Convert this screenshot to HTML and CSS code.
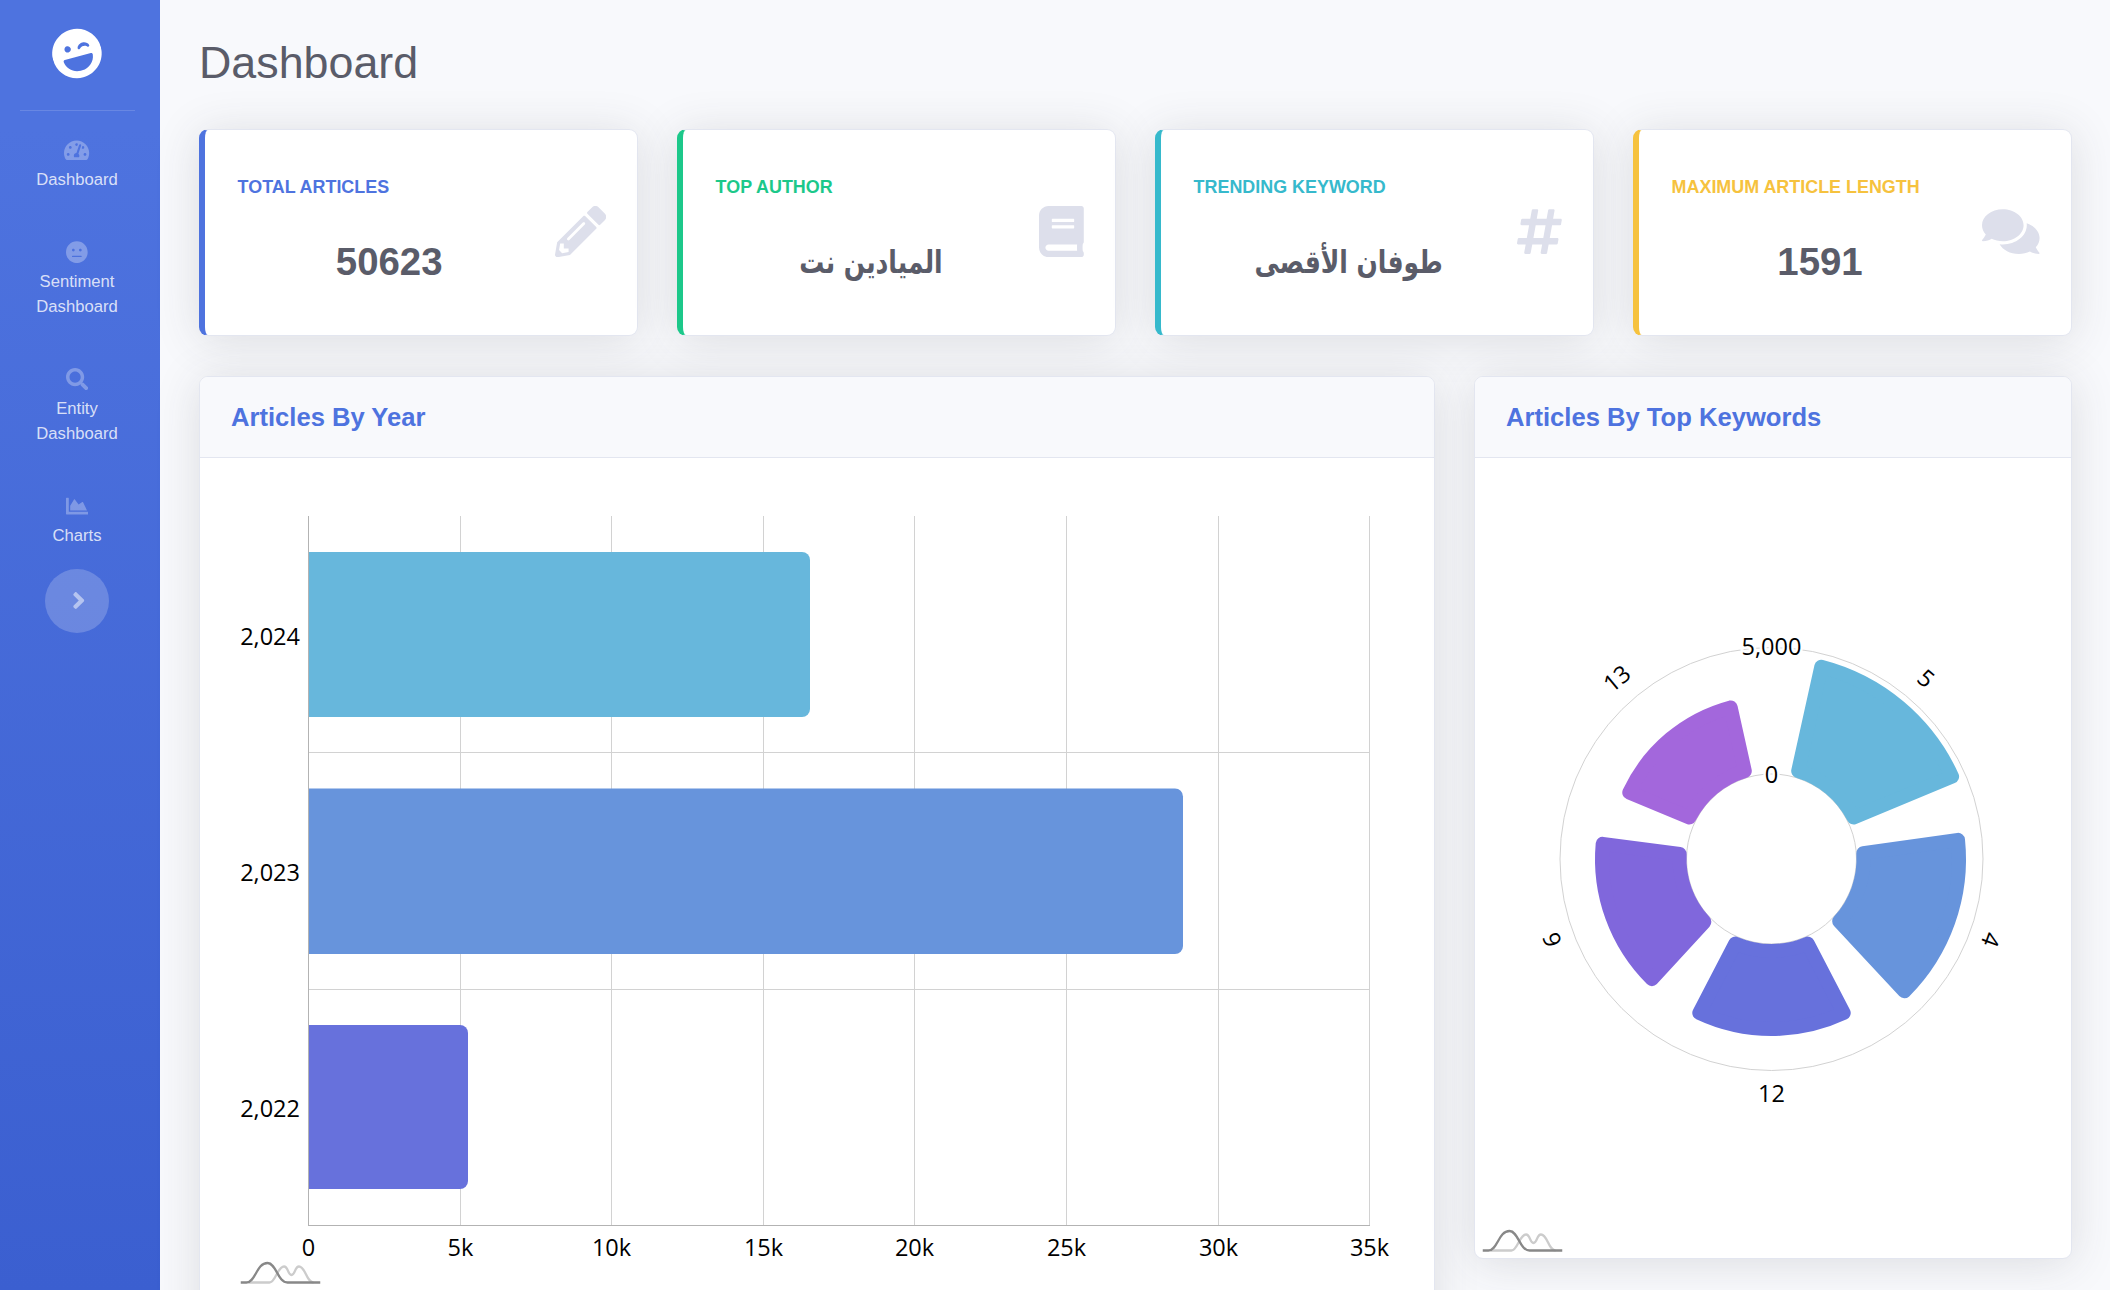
FILE: index.html
```html
<!DOCTYPE html>
<html lang="en">
<head>
    <meta charset="UTF-8">
    <title>Dashboard</title>
    <link rel="stylesheet" href="styles.css">
</head>
<body>
    <!-- sidebar -->
    <aside class="sidebar">
        <div class="brand">
            <svg class="brand-icon" viewBox="0 0 496 512"><path d="M248 8C111 8 0 119 0 256s111 248 248 248 248-111 248-248S385 8 248 8zm20.1 198.1c4-25.2 34.2-42.1 59.9-42.1s55.9 16.9 59.9 42.1c1.7 11.1-11.4 18.3-19.8 10.8l-9.5-8.5c-14.8-13.2-46.2-13.2-61 0L288 217c-8.4 7.4-21.6.3-19.9-10.9zM168 160c17.7 0 32 14.3 32 32s-14.3 32-32 32-32-14.3-32-32 14.3-32 32-32zm230.9 146C390 377 329.4 432 256 432h-16c-73.4 0-134-55-142.9-126-1.2-9.5 6.3-18 15.9-18h270c9.6 0 17.1 8.4 15.9 18z"/></svg>
        </div>
        <hr class="sidebar-divider">
        <a class="nav-link">
            <svg class="nav-icon" viewBox="0 0 576 512"><path d="M288 32C128.94 32 0 160.94 0 320c0 52.8 14.25 102.26 39.06 144.8 5.61 9.62 16.3 15.2 27.44 15.2h443c11.14 0 21.83-5.58 27.44-15.2C561.75 422.26 576 372.8 576 320c0-159.06-128.94-288-288-288zm0 64c14.71 0 26.58 10.13 30.32 23.65-1.11 2.26-2.64 4.23-3.45 6.67l-9.22 27.67c-5.13 3.49-10.97 6.01-17.64 6.01-17.67 0-32-14.33-32-32S270.33 96 288 96zM96 384c-17.67 0-32-14.33-32-32s14.33-32 32-32 32 14.33 32 32-14.33 32-32 32zm48-160c-17.67 0-32-14.33-32-32s14.33-32 32-32 32 14.33 32 32-14.33 32-32 32zm246.77-72.41l-61.33 184C343.13 347.33 352 364.54 352 384c0 11.72-3.38 22.55-8.88 32H232.88c-5.5-9.45-8.88-20.28-8.88-32 0-33.94 26.5-61.43 59.9-63.59l61.34-184.01c4.17-12.56 17.73-19.45 30.36-15.17 12.57 4.19 19.35 17.79 15.17 30.36zm14.66 57.2l15.52-46.55c3.47-1.29 7.13-2.23 11.05-2.23 17.67 0 32 14.33 32 32s-14.33 32-32 32c-11.38-.01-20.89-6.28-26.57-15.22zM480 384c-17.67 0-32-14.33-32-32s14.33-32 32-32 32 14.33 32 32-14.33 32-32 32z"/></svg>
            <span>Dashboard</span>
        </a>
        <a class="nav-link">
            <svg class="nav-icon" viewBox="0 0 496 512"><path d="M248 8C111 8 0 119 0 256s111 248 248 248 248-111 248-248S385 8 248 8zm-80 168c17.7 0 32 14.3 32 32s-14.3 32-32 32-32-14.3-32-32 14.3-32 32-32zm176 192H152c-21.2 0-21.2-32 0-32h192c21.2 0 21.2 32 0 32zm-16-128c-17.7 0-32-14.3-32-32s14.3-32 32-32 32 14.3 32 32-14.3 32-32 32z"/></svg>
            <span>Sentiment Dashboard</span>
        </a>
        <a class="nav-link">
            <svg class="nav-icon" viewBox="0 0 512 512"><path d="M505 442.7L405.3 343c-4.5-4.5-10.6-7-17-7H372c27.6-35.3 44-79.7 44-128C416 93.1 322.9 0 208 0S0 93.1 0 208s93.1 208 208 208c48.3 0 92.7-16.4 128-44v16.3c0 6.4 2.5 12.5 7 17l99.7 99.7c9.4 9.4 24.6 9.4 33.9 0l28.3-28.3c9.4-9.4 9.4-24.6.1-34zM208 336c-70.7 0-128-57.2-128-128 0-70.7 57.2-128 128-128 70.7 0 128 57.2 128 128 0 70.7-57.2 128-128 128z"/></svg>
            <span>Entity Dashboard</span>
        </a>
        <a class="nav-link">
            <svg class="nav-icon" viewBox="0 0 512 512"><path d="M500 384c6.6 0 12 5.4 12 12v40c0 6.6-5.4 12-12 12H12c-6.6 0-12-5.4-12-12V76c0-6.6 5.4-12 12-12h40c6.6 0 12 5.4 12 12v308h436zM372.7 159.5L288 216l-85.3-113.7c-5.1-6.8-15.5-6.3-19.9 1L96 248v104h384l-89.9-187.8c-3.2-6.5-11.4-8.7-17.4-4.7z"/></svg>
            <span>Charts</span>
        </a>
        <button class="sidebar-toggle">
            <svg class="toggle-icon" viewBox="0 0 256 512"><path d="M224.3 273l-136 136c-9.4 9.4-24.6 9.4-33.9 0l-22.6-22.6c-9.4-9.4-9.4-24.6 0-33.9l96.4-96.4-96.4-96.4c-9.4-9.4-9.4-24.6 0-33.9L54.3 103c9.4-9.4 24.6-9.4 33.9 0l136 136c9.5 9.4 9.5 24.6.1 34z"/></svg>
        </button>
    </aside>

    <main class="content">
        <h1 class="page-title">Dashboard</h1>

        <!-- stat cards -->
        <section class="stat-row">
            <div class="stat-card stat-primary">
                <div class="stat-text">
                    <div class="stat-label">Total Articles</div>
                    <div class="stat-value">50623</div>
                </div>
                <svg class="stat-icon" viewBox="0 0 512 512"><path d="M497.9 142.1l-46.1 46.1c-4.7 4.7-12.3 4.7-17 0l-111-111c-4.7-4.7-4.7-12.3 0-17l46.1-46.1c18.7-18.7 49.1-18.7 67.9 0l60.1 60.1c18.8 18.7 18.8 49.1 0 67.9zM284.2 99.8L21.6 362.4.4 483.9c-2.9 16.4 11.4 30.6 27.8 27.8l121.5-21.3 262.6-262.6c4.7-4.7 4.7-12.3 0-17l-111-111c-4.8-4.7-12.4-4.7-17.1 0zM124.1 339.9c-5.5-5.5-5.5-14.3 0-19.8l154-154c5.5-5.5 14.3-5.5 19.8 0s5.5 14.3 0 19.8l-154 154c-5.5 5.5-14.3 5.5-19.8 0zM88 424h48v36.3l-64.5 11.3-31.1-31.1L51.7 376H88v48z"/></svg>
            </div>
            <div class="stat-card stat-success">
                <div class="stat-text">
                    <div class="stat-label">Top Author</div>
                    <div class="stat-value"><span class="stat-arabic" dir="rtl">الميادين نت</span></div>
                </div>
                <svg class="stat-icon" viewBox="0 0 448 512"><path d="M448 360V24c0-13.3-10.7-24-24-24H96C43 0 0 43 0 96v320c0 53 43 96 96 96h328c13.3 0 24-10.7 24-24v-16c0-7.5-3.5-14.3-8.9-18.7-4.2-15.4-4.2-59.3 0-74.7 5.4-4.3 8.9-11.1 8.9-18.6zM128 134c0-3.3 2.7-6 6-6h212c3.3 0 6 2.7 6 6v20c0 3.3-2.7 6-6 6H134c-3.3 0-6-2.7-6-6v-20zm0 64c0-3.3 2.7-6 6-6h212c3.3 0 6 2.7 6 6v20c0 3.3-2.7 6-6 6H134c-3.3 0-6-2.7-6-6v-20zm253.4 250H96c-17.7 0-32-14.3-32-32 0-17.6 14.4-32 32-32h285.4c-1.9 17.1-1.9 46.9 0 64z"/></svg>
            </div>
            <div class="stat-card stat-info">
                <div class="stat-text">
                    <div class="stat-label">Trending Keyword</div>
                    <div class="stat-value"><span class="stat-arabic" dir="rtl">طوفان الأقصى</span></div>
                </div>
                <svg class="stat-icon" viewBox="0 0 448 512"><path d="M440.667 182.109l7.143-40c1.313-7.355-4.342-14.109-11.813-14.109h-74.81l14.623-81.891C377.123 38.754 371.468 32 363.997 32h-40.632a12 12 0 0 0-11.813 9.891L296.175 128H197.54l14.623-81.891C213.477 38.754 207.822 32 200.35 32h-40.632a12 12 0 0 0-11.813 9.891L132.528 128H53.432a12 12 0 0 0-11.813 9.891l-7.143 40C33.163 185.246 38.818 192 46.289 192h74.81L98.242 320H19.146a12 12 0 0 0-11.813 9.891l-7.143 40C-1.123 377.246 4.532 384 12.003 384h74.81L72.19 465.891C70.877 473.246 76.532 480 84.003 480h40.632a12 12 0 0 0 11.813-9.891L152.825 384h98.634l-14.623 81.891C235.523 473.246 241.178 480 248.65 480h40.632a12 12 0 0 0 11.813-9.891L316.472 384h79.096a12 12 0 0 0 11.813-9.891l7.143-40c1.313-7.355-4.342-14.109-11.813-14.109h-74.81l22.857-128h79.096a12 12 0 0 0 11.813-9.891zM262.889 320h-98.634l22.857-128h98.634l-22.857 128z"/></svg>
            </div>
            <div class="stat-card stat-warning">
                <div class="stat-text">
                    <div class="stat-label">Maximum Article Length</div>
                    <div class="stat-value">1591</div>
                </div>
                <svg class="stat-icon" viewBox="0 0 576 512"><path d="M416 192c0-88.4-93.1-160-208-160S0 103.6 0 192c0 34.3 14.1 65.9 38 92-13.4 30.2-35.5 54.2-35.8 54.5-2.2 2.3-2.8 5.7-1.5 8.7S4.8 352 8 352c36.6 0 66.9-12.3 88.7-25 32.2 15.7 70.3 25 111.3 25 114.9 0 208-71.6 208-160zm122 220c23.9-26 38-57.7 38-92 0-66.9-53.5-124.2-129.3-148.1.9 6.6 1.3 13.3 1.3 20.1 0 105.9-107.7 192-240 192-10.8 0-21.3-.8-31.7-1.9C207.8 439.6 281.8 480 368 480c41 0 79.1-9.2 111.3-25 21.8 12.7 52.1 25 88.7 25 3.2 0 6.1-1.9 7.3-4.8 1.3-2.9.7-6.3-1.5-8.7-.3-.3-22.4-24.2-35.8-54.5z"/></svg>
            </div>
        </section>

        <!-- charts -->
        <section class="chart-row">
            <div class="chart-card">
                <div class="chart-header"><h2>Articles By Year</h2></div>
                <svg class="chart chart-bars" viewBox="200 458 1234 900">
                    <symbol id="chart-logo" viewBox="0 -2 80 24">
                        <path class="logo-light" d="M8 20H29C35 20 37 4 43.5 4C48 4 47 12.5 51 12.5C55 12.5 54 4 58.5 4C65 4 66 20 73 20"/>
                        <path class="logo-dark" d="M0 20H6C15 20 16 .5 27 .5C36 .5 37 20 47 20H80"/>
                    </symbol>

                    <g class="grid-lines">
                        <line x1="460.5" y1="516" x2="460.5" y2="1225"/>
                        <line x1="611.5" y1="516" x2="611.5" y2="1225"/>
                        <line x1="763.5" y1="516" x2="763.5" y2="1225"/>
                        <line x1="914.5" y1="516" x2="914.5" y2="1225"/>
                        <line x1="1066.5" y1="516" x2="1066.5" y2="1225"/>
                        <line x1="1218.5" y1="516" x2="1218.5" y2="1225"/>
                        <line x1="1369.5" y1="516" x2="1369.5" y2="1225"/>
                        <line x1="308" y1="752.5" x2="1370" y2="752.5"/>
                        <line x1="308" y1="989.5" x2="1370" y2="989.5"/>
                    </g>
                    <path class="bar bar-1" d="M308 552H802a8 8 0 0 1 8 8V709a8 8 0 0 1-8 8H308Z"/>
                    <path class="bar bar-2" d="M308 788.5H1175a8 8 0 0 1 8 8V946a8 8 0 0 1-8 8H308Z"/>
                    <path class="bar bar-3" d="M308 1025H460a8 8 0 0 1 8 8V1181a8 8 0 0 1-8 8H308Z"/>
                    <g class="axis-lines">
                        <line x1="308.5" y1="516" x2="308.5" y2="1225.5"/>
                        <line x1="308" y1="1225.5" x2="1370" y2="1225.5"/>
                    </g>

                    <g class="axis-labels axis-y">
                        <text x="300" y="636">2,024</text>
                        <text x="300" y="872">2,023</text>
                        <text x="300" y="1108">2,022</text>
                    </g>
                    <g class="axis-labels axis-x">
                        <text x="308.5" y="1247">0</text>
                        <text x="460.5" y="1247">5k</text>
                        <text x="611.5" y="1247">10k</text>
                        <text x="763.5" y="1247">15k</text>
                        <text x="914.5" y="1247">20k</text>
                        <text x="1066.5" y="1247">25k</text>
                        <text x="1218.5" y="1247">30k</text>
                        <text x="1369.5" y="1247">35k</text>
                    </g>
                    <use href="#chart-logo" x="240.5" y="1260.5" width="80" height="24"/>
                </svg>
            </div>

            <div class="chart-card">
                <div class="chart-header"><h2>Articles By Top Keywords</h2></div>
                <svg class="chart chart-polar" viewBox="1475 458 596 800">
                    <g class="polar-rings">
                        <circle cx="1771.5" cy="859" r="211.5"/>
                        <circle cx="1771.5" cy="859" r="85"/>
                    </g>
                    <!-- data-a = start angle, data-r = outer radius -->
                    <path class="sector bar-1" data-a="12.5" data-r="205.5"/>
                    <path class="sector bar-2" data-a="82" data-r="194.5"/>
                    <path class="sector bar-3" data-a="152.5" data-r="177"/>
                    <path class="sector bar-4" data-a="222.5" data-r="176.5"/>
                    <path class="sector bar-5" data-a="292.5" data-r="164"/>

                    <g class="axis-labels polar-labels">
                        <text class="halo" x="1771.5" y="646">5,000</text>
                        <text class="halo" x="1771.5" y="774">0</text>
                        <text x="1926.5" y="678" transform="rotate(40 1926.5 678)">5</text>
                        <text x="1991.5" y="940" transform="rotate(110 1991.5 940)">4</text>
                        <text x="1771.5" y="1093">12</text>
                        <text x="1551.5" y="940" transform="rotate(250 1551.5 940)">6</text>
                        <text x="1616.5" y="678" transform="rotate(320 1616.5 678)">13</text>
                    </g>
                    <use href="#chart-logo" x="1482.5" y="1228.5" width="80" height="24"/>
                </svg>
            </div>
        </section>
    </main>

    <script src="chart.js"></script>
</body>
</html>
```

FILE: styles.css
```css
:root {
    --primary-color: #4e73df;
    --success-color: #1cc88a;
    --info-color: #36b9cc;
    --warning-color: #f6c23e;
    --text-color: #5a5c69;
    --border-color: #e3e6f0;
}

* {
    box-sizing: border-box;
    margin: 0;
    padding: 0;
}

html, body {
    height: 100%;
    overflow: hidden;
}

body {
    display: flex;
    background: #f8f9fc;
    color: var(--text-color);
    font-family: "Liberation Sans", Arial, "DejaVu Sans", sans-serif;
}

/* sidebar */
.sidebar {
    flex: none;
    display: flex;
    flex-direction: column;
    align-items: center;
    width: 160px;
    height: 100%;
    padding-right: 6px;
    background: linear-gradient(180deg, #4e73df 129px, #3b5fd0 100%);
}

.brand {
    display: flex;
    justify-content: center;
    padding-top: 28px;
    height: 110px;
}

.brand-icon {
    width: 50px;
    height: 51px;
    fill: #fff;
    transform: rotate(-15deg);
}

.sidebar-divider {
    width: 115px;
    height: 1px;
    margin-bottom: 1px;
    border: none;
    background: rgba(255, 255, 255, 0.15);
}

.nav-link {
    display: flex;
    flex-direction: column;
    align-items: center;
    width: 100%;
    padding: 27px 20px 21.6px;
    color: rgba(255, 255, 255, 0.8);
    font-size: 16.64px;
    line-height: 25px;
    text-align: center;
}

.nav-icon {
    display: block;
    height: 22.4px;
    margin-bottom: 6px;
    fill: rgba(255, 255, 255, 0.3);
}

.sidebar-toggle {
    flex: none;
    display: flex;
    align-items: center;
    justify-content: center;
    width: 64px;
    height: 64px;
    margin-top: -1px;
    border: none;
    border-radius: 50%;
    background: rgba(255, 255, 255, 0.2);
}

.toggle-icon {
    width: 13.5px;
    height: 27px;
    margin-left: 3px;
    fill: rgba(255, 255, 255, 0.5);
}

/* main area */
.content {
    flex: 1;
    min-width: 0;
    padding: 35px 38px 0 39px;
}

.page-title {
    height: 54px;
    margin-bottom: 40px;
    font-size: 44.8px;
    font-weight: 400;
    line-height: 54px;
}

/* stat cards */
.stat-row {
    display: grid;
    grid-template-columns: repeat(4, 1fr);
    gap: 39px;
}

.stat-card {
    display: flex;
    align-items: center;
    gap: 14px;
    height: 207px;
    padding: 43.5px 31px 49.5px 32.6px;
    border: 1px solid var(--border-color);
    border-left-width: 6.4px;
    border-radius: 9px;
    background: #fff;
    box-shadow: 0 4px 45px rgba(58, 59, 69, 0.15);
}

.stat-text {
    flex: 1;
    min-width: 0;
}

.stat-label {
    margin-bottom: 38.2px;
    font-size: 17.92px;
    font-weight: 700;
    line-height: 27px;
    text-transform: uppercase;
}

.stat-value {
    height: 46px;
    font-size: 38.4px;
    font-weight: 700;
    line-height: 46px;
    text-align: center;
}

/* no Arial-like Arabic face here, so squeeze the wide one to the same width */
.stat-arabic {
    display: inline-block;
    font-family: "DejaVu Sans", sans-serif;
    font-size: 32px;
    line-height: 46px;
    transform: translateY(-2px) scaleX(0.78);
}

.stat-icon {
    flex: none;
    height: 51.2px;
    margin-top: 4px;
    fill: #dddfeb;
}

.stat-primary { border-left-color: var(--primary-color); }
.stat-primary .stat-label { color: var(--primary-color); }
.stat-success { border-left-color: var(--success-color); }
.stat-success .stat-label { color: var(--success-color); }
.stat-info { border-left-color: var(--info-color); }
.stat-info .stat-label { color: var(--info-color); }
.stat-warning { border-left-color: var(--warning-color); }
.stat-warning .stat-label { color: var(--warning-color); }

/* charts */
.chart-row {
    display: grid;
    grid-template-columns: 1236fr 598fr;
    gap: 39px;
    align-items: start;
    margin-top: 40px;
}

.chart-card {
    overflow: hidden;
    border: 1px solid var(--border-color);
    border-radius: 9px;
    background: #fff;
    box-shadow: 0 4px 45px rgba(58, 59, 69, 0.15);
}

.chart-header {
    padding: 20px 31px 19px;
    border-bottom: 1px solid var(--border-color);
    background: #f8f9fc;
}

.chart-header h2 {
    color: var(--primary-color);
    font-size: 25.6px;
    font-weight: 700;
    line-height: 41px;
}

.chart {
    display: block;
    width: 100%;
}

.chart-bars { height: 900px; }
.chart-polar { height: 800px; }

.grid-lines line {
    stroke: #d2d2d2;
    stroke-width: 1;
}

.axis-lines line {
    stroke: #b3b3b3;
    stroke-width: 1;
}

.bar-1 { fill: #67b7dc; stroke: #67b7dc; }
.bar-2 { fill: #6794dc; stroke: #6794dc; }
.bar-3 { fill: #6771dc; stroke: #6771dc; }
.bar-4 { fill: #8067dc; stroke: #8067dc; }
.bar-5 { fill: #a367dc; stroke: #a367dc; }

.bar { stroke: none; }

.sector {
    stroke-width: 14;
    stroke-linejoin: round;
}

.polar-rings circle {
    fill: none;
    stroke: #d2d2d2;
    stroke-width: 1;
}

.axis-labels text {
    fill: #000;
    font-family: "Open Sans", "Noto Sans", sans-serif;
    font-size: 23.5px;
    dominant-baseline: central;
}

.axis-y text { text-anchor: end; }
.axis-x text, .polar-labels text { text-anchor: middle; }

.polar-labels .halo {
    stroke: #fff;
    stroke-width: 5px;
    paint-order: stroke;
}

.logo-dark, .logo-light {
    fill: none;
    stroke-width: 2.3;
}

.logo-dark { stroke: #888; }
.logo-light { stroke: #ccc; }
```

FILE: chart.js
```js
// polar chart sectors, corners rounded with a thick round-joined stroke
const CX = 1771.5, CY = 859, INNER = 85, SWEEP = 55, CORNER = 7;

function point(r, deg) {
    const a = deg * Math.PI / 180;
    return (CX + r * Math.sin(a)).toFixed(2) + ' ' + (CY - r * Math.cos(a)).toFixed(2);
}

function inset(r) {
    return Math.asin(CORNER / r) * 180 / Math.PI;
}

document.querySelectorAll('.sector').forEach(sector => {
    const start = parseFloat(sector.dataset.a);
    const end = start + SWEEP;
    const r0 = INNER + CORNER;
    const r1 = parseFloat(sector.dataset.r) - CORNER;

    sector.setAttribute('d',
        `M${point(r0, start + inset(r0))}` +
        `A${r0} ${r0} 0 0 1 ${point(r0, end - inset(r0))}` +
        `L${point(r1, end - inset(r1))}` +
        `A${r1} ${r1} 0 0 0 ${point(r1, start + inset(r1))}Z`);
});
```
